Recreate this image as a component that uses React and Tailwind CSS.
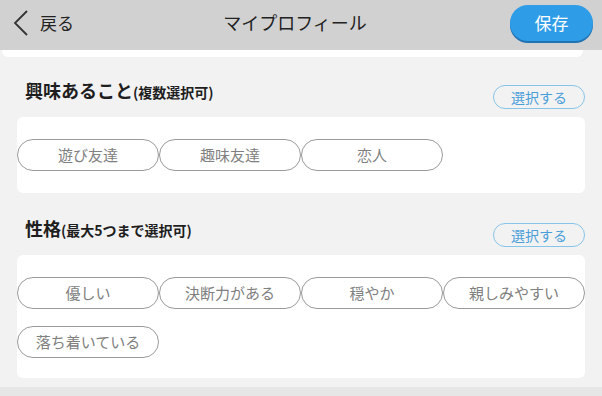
import React from "react";

const font = { fontFamily: '"Noto Sans CJK JP", "Noto Sans", sans-serif' };

const Chip = ({label}) => (
    <div className="h-[32px] rounded-full border border-[#9a9a9a] bg-white flex items-center justify-center text-[15px] text-[#808080]">
        {label}
    </div>
);

const Section = ({title, note, items, first}) => (
    <div className={`px-[17px] ${first ? "pt-[28px]" : "pt-[30px]"}`}>
        <div className="flex items-center justify-between h-[24px] mb-[8px]">
            <h2 className="pl-[8px] mb-[14px] text-[18px] font-bold text-[#1e1e1e] leading-none">
                {title}<span className="text-[14px]">{note}</span>
            </h2>
            <button className="w-[92px] h-[24px] rounded-full border border-[#86c4ea] text-[14px] text-[#4b9fd9] bg-transparent leading-none">
                選択する
            </button>
        </div>
        <div className={`bg-white rounded-[6px] pt-[22px] ${first ? "pb-[22px]" : "pb-[20px]"} grid grid-cols-4 gap-y-[17px]`}>
            {items.map((item) => (
                <Chip key={item} label={item}/>
            ))}
        </div>
    </div>
);

export default function App() {
    return (
        <div className="w-[602px] h-[396px] bg-[#f2f2f2] flex flex-col overflow-hidden" style={font}>
            <header className="h-[50px] shrink-0 bg-[#d1d1d1] flex items-center pb-[5px]">
                <div className="w-[100px] flex items-center pl-[13px]">
                    <svg width="16" height="26" viewBox="0 0 16 26">
                        <path d="M14 1 L2 13 L14 25" fill="none" stroke="#333" strokeWidth="1.8"/>
                    </svg>
                    <span className="ml-[11px] text-[17px] text-[#222]">戻る</span>
                </div>
                <h1 className="flex-1 text-center text-[18px] text-[#222] pr-[12px]">マイプロフィール</h1>
                <div className="w-[100px] flex justify-end pr-[9px]">
                    <button className="w-[83px] h-[36px] rounded-[18px] bg-[#2f9ce7] text-white text-[17px] shadow-[0_2px_0_#1f73b3]">
                        保存
                    </button>
                </div>
            </header>
            <div className="h-[7px] w-[581px] ml-[2px] bg-white rounded-b-[6px] shrink-0"></div>
            <Section first title="興味あること" note="(複数選択可)" items={["遊び友達", "趣味友達", "恋人"]}/>
            <Section title="性格" note="(最大5つまで選択可)" items={["優しい", "決断力がある", "穏やか", "親しみやすい", "落ち着いている"]}/>
            <div className="mt-[9px] h-[20px] bg-[#e6e6e6] shrink-0"></div>
        </div>
    );
}
